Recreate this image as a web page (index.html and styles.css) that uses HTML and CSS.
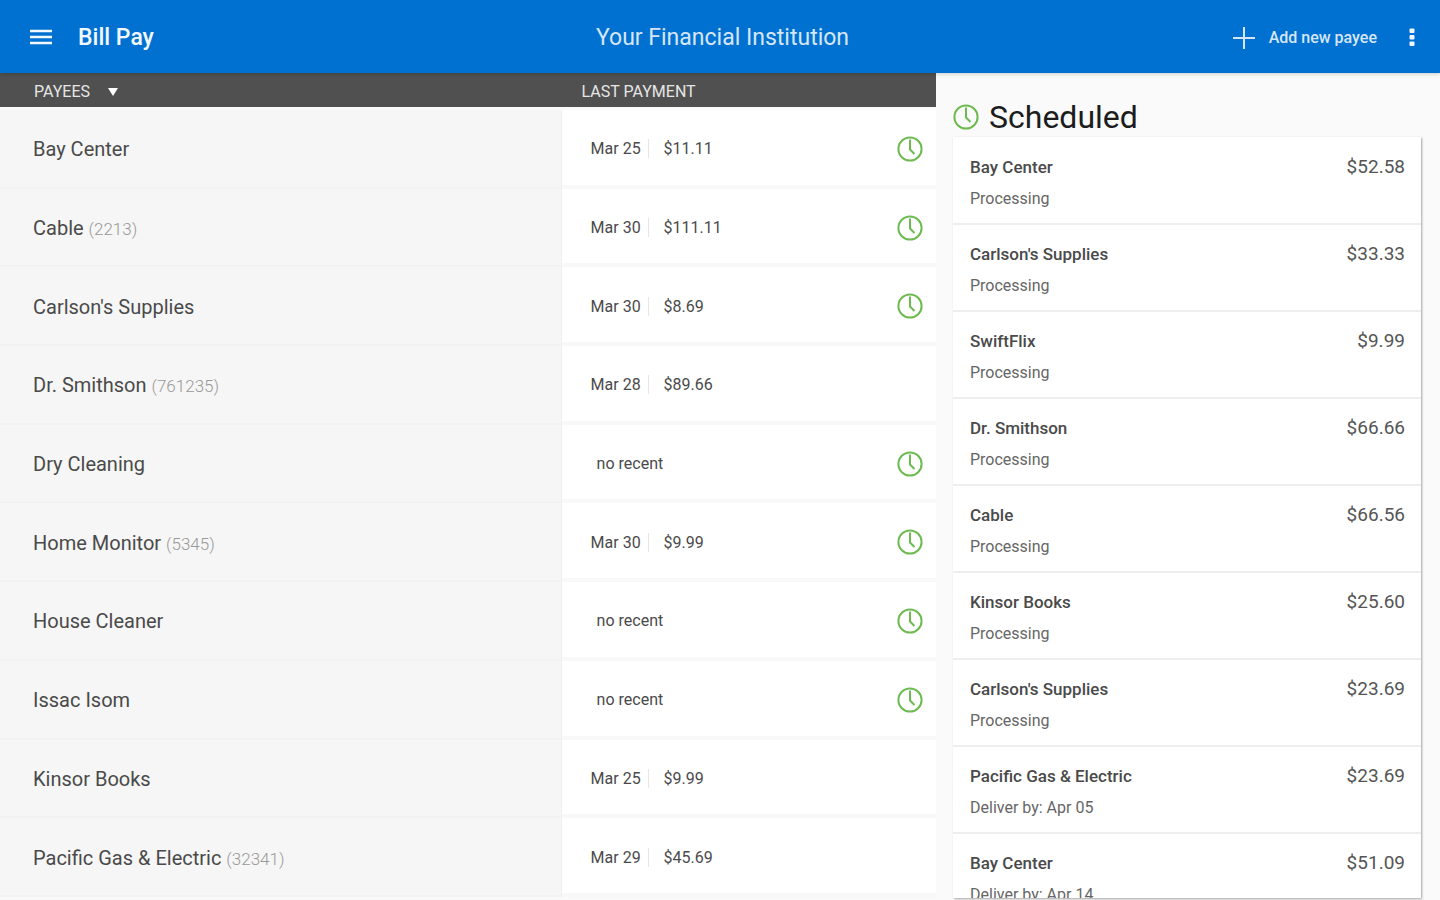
FILE: index.html
```
<!DOCTYPE html>
<html lang="en">
<head>
    <meta charset="UTF-8">
    <meta name="viewport" content="width=device-width, initial-scale=1.0">
    <title>Bill Pay</title>
    <link rel="stylesheet" href="styles.css">
</head>
<body>
    <svg class="sprite" aria-hidden="true">
        <symbol id="clock" viewBox="0 0 26 26">
            <circle cx="13" cy="13" r="11.6" fill="none" stroke="currentColor" stroke-width="2"/>
            <path d="M13 3.5v10l4.5 4.5" fill="none" stroke="currentColor" stroke-width="2"/>
        </symbol>
    </svg>

    <header class="topbar">
        <div class="topbar-left">
            <button type="button" class="icon-button" aria-label="Menu">
                <svg width="22" height="18" viewBox="0 0 22 18"><path d="M0 2h22M0 8h22M0 14h22" stroke="currentColor" stroke-width="2.6"/></svg>
            </button>
            <h1>Bill Pay</h1>
        </div>
        <div class="institution">Your Financial Institution</div>
        <div class="topbar-right">
            <button type="button" class="add-button">
                <svg width="22" height="22" viewBox="0 0 22 22"><path d="M11 0v22M0 11h22" stroke="currentColor" stroke-width="2"/></svg>
                Add new payee
            </button>
            <button type="button" class="icon-button" aria-label="More options">
                <svg width="6" height="20" viewBox="0 0 6 20" fill="currentColor"><rect x="0.5" y="0.5" width="5" height="4.5" rx="1"/><rect x="0.5" y="7" width="5" height="4.5" rx="1"/><rect x="0.5" y="13.5" width="5" height="4.5" rx="1"/></svg>
            </button>
        </div>
    </header>

    <main class="content">
        <table class="payees">
            <thead>
                <tr>
                    <th class="col-name"><button type="button" class="sort-button">PAYEES <span class="arrow"></span></button></th>
                    <th class="col-payment">LAST PAYMENT</th>
                </tr>
            </thead>
            <tbody>
                <tr>
                    <td class="name">Bay Center</td>
                    <td class="payment"><div class="last"><span class="date">Mar 25</span><span class="amount">$11.11</span><svg class="clock"><use href="#clock"/></svg></div></td>
                </tr>
                <tr>
                    <td class="name">Cable <small>(2213)</small></td>
                    <td class="payment"><div class="last"><span class="date">Mar 30</span><span class="amount">$111.11</span><svg class="clock"><use href="#clock"/></svg></div></td>
                </tr>
                <tr>
                    <td class="name">Carlson's Supplies</td>
                    <td class="payment"><div class="last"><span class="date">Mar 30</span><span class="amount">$8.69</span><svg class="clock"><use href="#clock"/></svg></div></td>
                </tr>
                <tr>
                    <td class="name">Dr. Smithson <small>(761235)</small></td>
                    <td class="payment"><div class="last"><span class="date">Mar 28</span><span class="amount">$89.66</span></div></td>
                </tr>
                <tr>
                    <td class="name">Dry Cleaning</td>
                    <td class="payment"><div class="last"><span class="none">no recent</span><svg class="clock"><use href="#clock"/></svg></div></td>
                </tr>
                <tr>
                    <td class="name">Home Monitor <small>(5345)</small></td>
                    <td class="payment"><div class="last"><span class="date">Mar 30</span><span class="amount">$9.99</span><svg class="clock"><use href="#clock"/></svg></div></td>
                </tr>
                <tr>
                    <td class="name">House Cleaner</td>
                    <td class="payment"><div class="last"><span class="none">no recent</span><svg class="clock"><use href="#clock"/></svg></div></td>
                </tr>
                <tr>
                    <td class="name">Issac Isom</td>
                    <td class="payment"><div class="last"><span class="none">no recent</span><svg class="clock"><use href="#clock"/></svg></div></td>
                </tr>
                <tr>
                    <td class="name">Kinsor Books</td>
                    <td class="payment"><div class="last"><span class="date">Mar 25</span><span class="amount">$9.99</span></div></td>
                </tr>
                <tr>
                    <td class="name">Pacific Gas &amp; Electric <small>(32341)</small></td>
                    <td class="payment"><div class="last"><span class="date">Mar 29</span><span class="amount">$45.69</span></div></td>
                </tr>
            </tbody>
        </table>

        <aside class="scheduled">
            <h2><svg class="clock"><use href="#clock"/></svg>Scheduled</h2>
            <ul class="bills">
                <li><div><strong>Bay Center</strong><p>Processing</p></div><span class="price">$52.58</span></li>
                <li><div><strong>Carlson's Supplies</strong><p>Processing</p></div><span class="price">$33.33</span></li>
                <li><div><strong>SwiftFlix</strong><p>Processing</p></div><span class="price">$9.99</span></li>
                <li><div><strong>Dr. Smithson</strong><p>Processing</p></div><span class="price">$66.66</span></li>
                <li><div><strong>Cable</strong><p>Processing</p></div><span class="price">$66.56</span></li>
                <li><div><strong>Kinsor Books</strong><p>Processing</p></div><span class="price">$25.60</span></li>
                <li><div><strong>Carlson's Supplies</strong><p>Processing</p></div><span class="price">$23.69</span></li>
                <li><div><strong>Pacific Gas &amp; Electric</strong><p>Deliver by: Apr 05</p></div><span class="price">$23.69</span></li>
                <li><div><strong>Bay Center</strong><p>Deliver by: Apr 14</p></div><span class="price">$51.09</span></li>
            </ul>
        </aside>
    </main>
</body>
</html>
```
FILE: styles.css
```
* {
    box-sizing: border-box;
}
body {
    margin: 0;
    height: 100vh;
    display: flex;
    flex-direction: column;
    font-family: Roboto, "Liberation Sans", sans-serif;
    background-color: #fafafa;
    color: #4a4a4a;
}
button {
    font: inherit;
    color: inherit;
    background: none;
    border: none;
    padding: 0;
    cursor: pointer;
}
svg {
    display: block;
}
.sprite {
    display: none;
}
.clock {
    width: 26px;
    height: 26px;
    flex: none;
    color: #6dbb50;
}

/* top bar */
.topbar {
    display: grid;
    grid-template-columns: 1fr auto 1fr;
    align-items: center;
    flex: none;
    height: 73px;
    padding: 2px 25px 0 30px;
    background-color: #0071d0;
    color: #f2f8ff;
    box-shadow: 0 1px 4px rgba(0, 0, 0, 0.2);
    z-index: 1;
}
.topbar-left {
    display: flex;
    align-items: center;
    gap: 26px;
}
.topbar h1 {
    margin: 0;
    font-size: 23px;
    font-weight: 500;
}
.institution {
    font-size: 23px;
    color: #d6e6f8;
}
.topbar-right {
    display: flex;
    align-items: center;
    justify-content: flex-end;
    gap: 32px;
}
.add-button {
    display: flex;
    align-items: center;
    gap: 14px;
    font-size: 16px;
    font-weight: 500;
    color: #d6e6f8;
}

.content {
    display: flex;
    flex: 1;
    min-height: 0;
}

/* payees table */
.payees {
    width: 65%;
    height: calc(100% - 3px);
    border-spacing: 0;
    table-layout: fixed;
}
.payees th {
    height: 37px;
    padding: 3px 0 0;
    background-color: #505050;
    background-clip: padding-box;
    border-bottom: 3px solid #fafafa;
    color: #e6e6e6;
    font-size: 16px;
    font-weight: 400;
    text-align: left;
}
.payees .col-name {
    width: 60%;
    padding-left: 34px;
}
.payees .col-payment {
    padding-left: 20px;
}
.sort-button {
    display: flex;
    align-items: center;
    gap: 18px;
}
.arrow {
    border: 5px solid transparent;
    border-top: 8px solid #fff;
    border-bottom: none;
}
.payees td {
    height: 40px;
    padding: 2px 0 0;
}
.payees .name {
    padding-left: 33px;
    background-color: #f6f6f6;
    border-bottom: 2px solid #f2f2f2;
    border-right: 1px solid #f0f0f0;
    font-size: 20px;
}
.name small {
    font-size: 17px;
    font-weight: 300;
    color: #999;
}
.payees .payment {
    padding: 3px 13px 0 29px;
    background-color: #fff;
    border-bottom: 4px solid #f8f8f8;
    font-size: 16px;
}
.last {
    display: flex;
    align-items: center;
}
.date {
    width: 58px;
    border-right: 1px solid #e6e6e6;
}
.amount {
    padding-left: 15px;
}
.none {
    padding-left: 6px;
}
.last .clock {
    margin-left: auto;
}

/* scheduled bills */
.scheduled {
    display: flex;
    flex-direction: column;
    flex: 1;
    min-width: 0;
    padding: 24px 19px 2px 17px;
}
.scheduled h2 {
    display: flex;
    align-items: center;
    gap: 10px;
    margin: 0;
    font-size: 32px;
    font-weight: 400;
    line-height: 40px;
    color: #1c1c1c;
}
.bills {
    flex: 1;
    min-height: 0;
    margin: 0;
    padding: 1px 0 0;
    overflow-y: auto;
    scrollbar-width: none;
    list-style: none;
    background-color: #fff;
    box-shadow: 1px 1px 2px rgba(0, 0, 0, 0.35);
}
.bills li {
    display: flex;
    justify-content: space-between;
    height: 87px;
    padding: 17px 16px 0 17px;
    border-bottom: 2px solid #eee;
    line-height: 24px;
}
.bills strong {
    font-size: 17px;
    font-weight: 500;
}
.bills p {
    margin: 7px 0 0;
    font-size: 16px;
    color: #666;
}
.price {
    font-size: 19px;
    color: #555;
}
```
